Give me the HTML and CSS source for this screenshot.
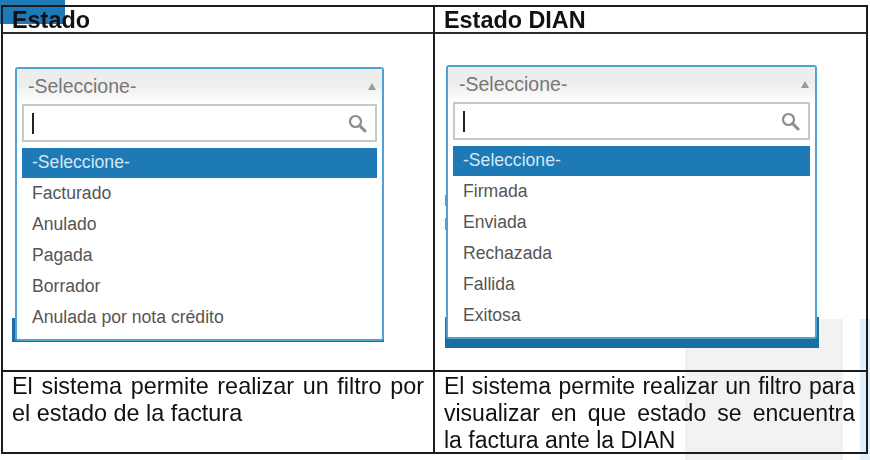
FILE: index.html
```html
<!DOCTYPE html>
<html lang="es">
<head>
  <meta charset="UTF-8" />
  <title>Estado</title>
  <link rel="stylesheet" href="styles.css">
</head>
<body>
  <div class="bg-blue"></div>
  <div class="bg-gray"></div>
  <div class="bg-light"></div>

  <div class="doc-table">
    <div class="head left">Estado</div>
    <div class="head">Estado DIAN</div>

    <div class="shot left shot-a">
      <div class="under under-a"></div>
      <div class="combo combo-a">
        <div class="combo-top">
          <span>-Seleccione-</span>
          <span class="arrow"></span>
        </div>
        <div class="search">
          <span class="caret"></span>
          <svg class="lens" width="19" height="19" viewBox="0 0 19 19">
            <circle cx="7.5" cy="7.5" r="5.5" fill="none" stroke="#8c8c8c" stroke-width="2.2" />
            <path d="M11.8 11.8 L17 17" stroke="#8c8c8c" stroke-width="3" stroke-linecap="round" />
          </svg>
        </div>
        <ul class="options">
          <li class="selected">-Seleccione-</li>
          <li>Facturado</li>
          <li>Anulado</li>
          <li>Pagada</li>
          <li>Borrador</li>
          <li>Anulada por nota crédito</li>
        </ul>
      </div>
    </div>

    <div class="shot shot-b">
      <div class="under under-b"></div>
      <div class="tick tick-1"></div>
      <div class="tick tick-2"></div>
      <div class="combo combo-b">
        <div class="combo-top">
          <span>-Seleccione-</span>
          <span class="arrow"></span>
        </div>
        <div class="search">
          <span class="caret"></span>
          <svg class="lens" width="19" height="19" viewBox="0 0 19 19">
            <circle cx="7.5" cy="7.5" r="5.5" fill="none" stroke="#8c8c8c" stroke-width="2.2" />
            <path d="M11.8 11.8 L17 17" stroke="#8c8c8c" stroke-width="3" stroke-linecap="round" />
          </svg>
        </div>
        <ul class="options">
          <li class="selected">-Seleccione-</li>
          <li>Firmada</li>
          <li>Enviada</li>
          <li>Rechazada</li>
          <li>Fallida</li>
          <li>Exitosa</li>
        </ul>
      </div>
    </div>

    <div class="desc left">El sistema permite realizar un filtro por el estado de la factura</div>
    <div class="desc desc-b">El sistema permite realizar un filtro para visualizar en que estado se encuentra la factura ante la DIAN</div>
  </div>
</body>
</html>
```

FILE: styles.css
```css
body {
  margin: 0;
  padding: 5px 0 0 1px;
  height: 460px;
  box-sizing: border-box;
  overflow: hidden;
  background: #fff;
  font-family: "Liberation Sans", Arial, sans-serif;
}

/* restos del documento detras de la tabla */
.bg-blue {
  position: absolute;
  top: 0;
  left: 0;
  width: 65px;
  height: 24px;
  background: #1d7ab7;
}
.bg-gray {
  position: absolute;
  top: 319px;
  left: 685px;
  width: 158px;
  height: 141px;
  background: #f2f2f2;
}
.bg-light {
  position: absolute;
  top: 319px;
  left: 860px;
  width: 10px;
  height: 141px;
  background: #e3eff8;
}

/* la captura original esta algo borrosa */
.doc-table {
  position: relative;
  display: grid;
  grid-template-columns: 432px 431px;
  grid-template-rows: 27px 338px 80px;
  width: 867px;
  box-sizing: border-box;
  border: 2px solid #1c1c1c;
  color: #111;
  filter: blur(0.35px);
}

.head {
  border-bottom: 2px solid #2a2a2a;
  padding-left: 9px;
  font-size: 23.4px;
  font-weight: bold;
  line-height: 26px;
}
.left {
  border-right: 2px solid #1c1c1c;
}

.shot {
  position: relative;
  border-bottom: 2px solid #1c1c1c;
}
.shot-a {
  padding: 33px 0 0 12px;
}
.shot-b {
  padding: 31px 0 0 11px;
}

/* boton que queda tapado por el combo */
.under {
  position: absolute;
  background: #1b6ea5;
}
.under-a {
  top: 284px;
  left: 9px;
  width: 372px;
  height: 24px;
}
.under-b {
  top: 283px;
  left: 10px;
  width: 374px;
  height: 31px;
}
.tick {
  position: absolute;
  left: 10px;
  width: 2px;
  background: #4f9fd0;
}
.tick-1 {
  top: 161px;
  height: 11px;
}
.tick-2 {
  top: 184px;
  height: 12px;
}

.combo {
  position: relative;
  box-sizing: border-box;
  height: 274px;
  padding: 0 5px;
  border: 2px solid #4ea4cf;
  border-radius: 3px;
  background: #fff;
}
.combo-a {
  width: 369px;
}
.combo-b {
  width: 371px;
}

.combo-top {
  display: flex;
  justify-content: space-between;
  align-items: center;
  height: 35px;
  margin: 0 -5px;
  padding: 0 6px 0 11px;
  background: linear-gradient(#ededed 45%, #fff);
  color: #777;
  font-size: 19.5px;
}
.arrow {
  width: 0;
  height: 0;
  border-left: 4px solid transparent;
  border-right: 4px solid transparent;
  border-bottom: 7px solid #9a9a9a;
}

.search {
  display: flex;
  justify-content: space-between;
  align-items: center;
  box-sizing: border-box;
  height: 38px;
  padding: 0 8px;
  border: 2px solid #c8c8c8;
}
.caret {
  width: 2px;
  height: 21px;
  background: #222;
}

.options {
  margin: 6px 0 0;
  padding: 0;
  list-style: none;
  color: #555;
  font-size: 17.6px;
}
.options li {
  height: 31px;
  padding-left: 10px;
  line-height: 30px;
}
.options .selected {
  height: 30px;
  line-height: 28px;
  background: #1d7ab7;
  color: #d5e7f3;
}

.desc {
  padding: 1px 9px 0;
  font-size: 23.4px;
  line-height: 27px;
  text-align: justify;
}
.desc-b {
  padding-right: 11px;
  font-size: 23px;
}
```
